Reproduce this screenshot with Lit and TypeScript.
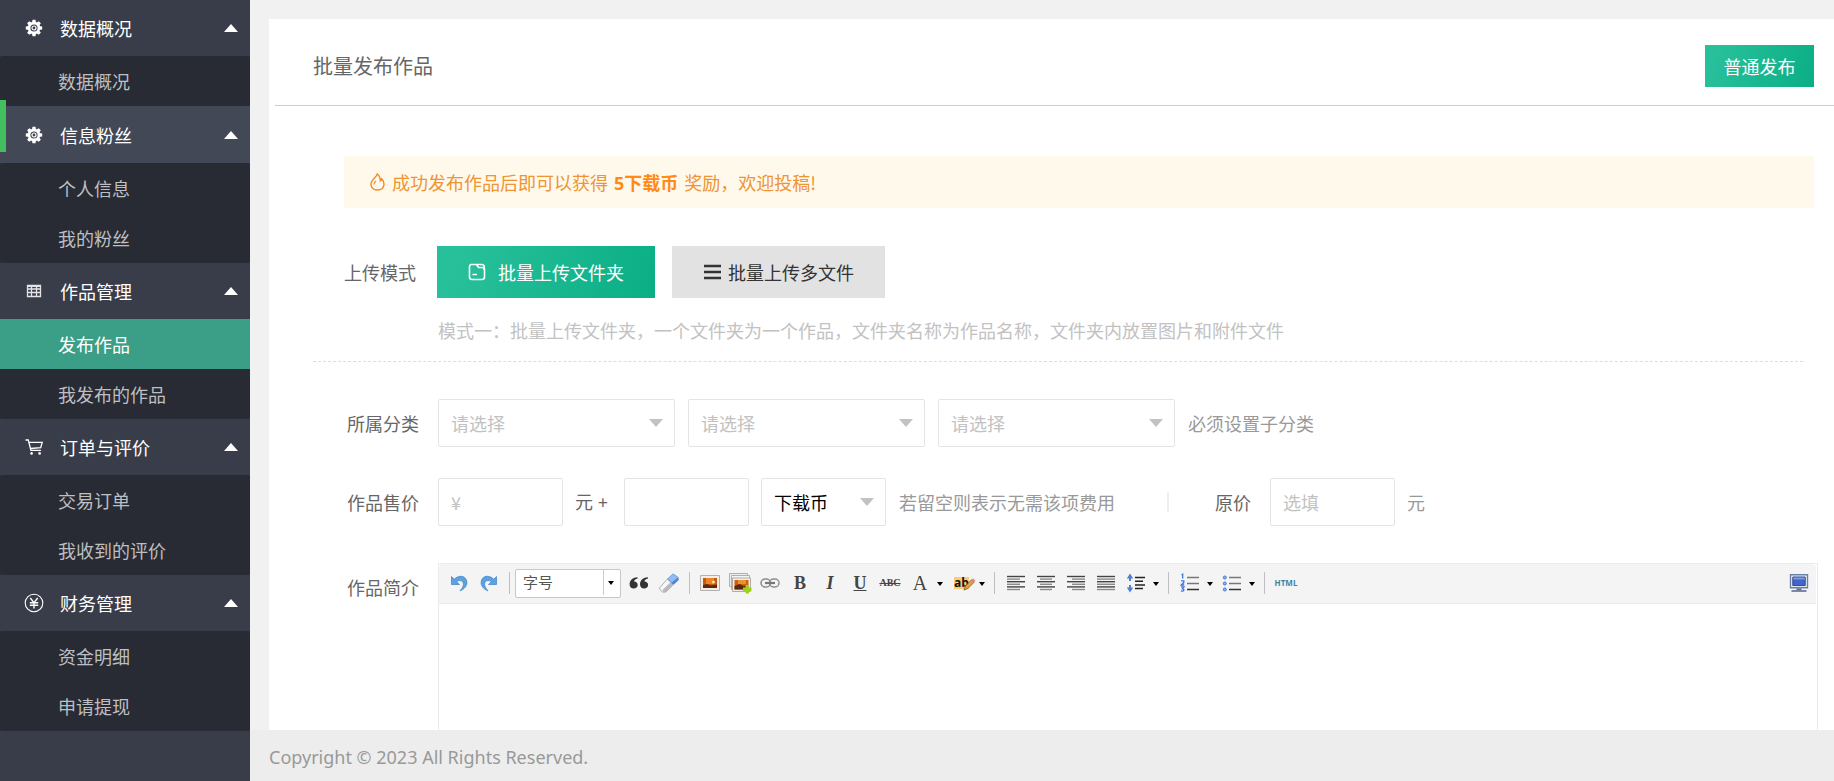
import { LitElement, html, css, svg, nothing, TemplateResult } from "lit";
import { customElement, state } from "lit/decorators.js";
import { classMap } from "lit/directives/class-map.js";

interface Group {
  title: string;
  icon: TemplateResult;
  items: string[];
  hot?: boolean;
}

const teeth = [0, 45, 90, 135, 180, 225, 270, 315];

const gear = html`<svg class="ico" viewBox="0 0 20 20">
  ${teeth.map(
    (a) => svg`<path d="M7.9 5.2 8.5 1.800h3L12.100 5.200z" fill="#fff" transform=${`rotate(${a} 10 10)`}/>`
  )}
  <circle cx="10" cy="10" r="4.900" fill="none" stroke="#fff" stroke-width="2.600" />
  <circle cx="10" cy="10" r="2" fill="none" stroke="#fff" stroke-width="1.200" />
</svg>`;

const grid = html`<svg class="ico" viewBox="0 0 20 20" fill="none" stroke="#e4e4e6">
  <path d="M3.5 4.5h13v11h-13zM3 8h14M3 11.5h14M7.5 5v11M12.5 5v11" stroke-width="1.3" />
  <path d="M3 5h14" stroke-width="2" />
</svg>`;

const cart = html`<svg class="ico" viewBox="0 0 20 20" fill="none" stroke="#fff" stroke-width="1.3">
  <path d="M1.5 3h2.8l2.6 10.3h10M5 5.3h13.2l-1.5 5.4-10.2.8" />
  <circle cx="7.6" cy="16.4" r="1.3" fill="#fff" stroke="none" />
  <circle cx="15.6" cy="16.4" r="1.3" fill="#fff" stroke="none" />
</svg>`;

const yen = html`<svg class="ico" viewBox="0 0 20 20" fill="none" stroke="#fff">
  <circle cx="10" cy="10" r="8.8" stroke-width="1.1" />
  <path d="M6.3 5 10 9.6 13.7 5M10 9.6V15.5M5.8 9.8h8.4M5.8 12.3h8.4" stroke-width="1.4" />
</svg>`;

const GROUPS: Group[] = [
  { title: "数据概况", icon: gear, items: ["数据概况"] },
  { title: "信息粉丝", icon: gear, items: ["个人信息", "我的粉丝"], hot: true },
  { title: "作品管理", icon: grid, items: ["发布作品", "我发布的作品"] },
  { title: "订单与评价", icon: cart, items: ["交易订单", "我收到的评价"] },
  { title: "财务管理", icon: yen, items: ["资金明细", "申请提现"] },
];

const FONT = css`"Noto Sans CJK SC", "Noto Sans", sans-serif`;
const LATIN = css`"Noto Sans", "Noto Sans CJK SC", sans-serif`;

@customElement("side-menu")
class SideMenu extends LitElement {
  @state() private closed = new Set<number>();
  @state() private current = "发布作品";

  static styles = css`
    :host {
      display: block;
      background: #393d49;
      font: 18px/24px ${FONT};
    }
    .group {
      position: relative;
    }
    .head {
      display: flex;
      align-items: center;
      width: 100%;
      height: 56px;
      padding: 0 12px 0 24px;
      border: 0;
      background: none;
      color: #fff;
      font: inherit;
      cursor: pointer;
    }
    .hot .head {
      height: 57px;
      background: #434856;
    }
    .hot::before {
      content: "";
      position: absolute;
      left: 0;
      top: -6px;
      width: 6px;
      height: 52px;
      background: #44bf5f;
    }
    .ico {
      width: 20px;
      height: 20px;
      margin-right: 16px;
    }
    .arrow {
      margin-left: auto;
      border: solid transparent;
      border-width: 0 7px 8px;
      border-bottom-color: #fff;
    }
    .shut .arrow {
      border-width: 8px 7px 0;
      border-top-color: #fff;
    }
    .list {
      border-radius: 2px;
      background: #282b33;
    }
    .link {
      display: flex;
      align-items: center;
      height: 50px;
      padding-left: 58px;
      color: #bebfc2;
      text-decoration: none;
    }
    .link.on {
      background: #3a9f86;
      color: #fff;
    }
  `;

  private toggle(i: number) {
    const next = new Set(this.closed);
    next.has(i) ? next.delete(i) : next.add(i);
    this.closed = next;
  }

  render() {
    return html`<nav>
      ${GROUPS.map(
        (g, i) => html`<section
          class=${classMap({ group: true, hot: !!g.hot, shut: this.closed.has(i) })}
        >
          <button class="head" type="button" @click=${() => this.toggle(i)}>
            ${g.icon}<span>${g.title}</span><span class="arrow"></span>
          </button>
          ${this.closed.has(i)
            ? nothing
            : html`<div class="list">
                ${g.items.map(
                  (t) => html`<a
                    href="#"
                    class=${classMap({ link: true, on: t === this.current })}
                    @click=${(e: Event) => {
                      e.preventDefault();
                      this.current = t;
                    }}
                    >${t}</a
                  >`
                )}
              </div>`}
        </section>`
      )}
    </nav>`;
  }
}

const lines = (rows: [number, number][]) => html`<svg class="pic" viewBox="0 0 20 20">
  ${rows.map(([x, w], i) => svg`<path d=${`M${x} ${3.5 + i * 2.6}h${w}`} stroke=${i % 2 ? "#8a8a8a" : "#444"} stroke-width="1.4"/>`)}
</svg>`;

const undoPath = "M2.5 3.5v8h8L7.6 8.8c2.4-2 5.6-1.4 6.6.9.9 2.4-.6 5-3.2 8.2 4.800-2 7.400-5.400 6.800-9.400C17 3 10.500 1.200 5.200 6.200z";

const picUndo = html`<svg class="pic" viewBox="0 0 20 20">
  <path d=${undoPath} fill="#5ba3e0" stroke="#3b7fc4" stroke-width=".7" />
</svg>`;
const picRedo = html`<svg class="pic" viewBox="0 0 20 20">
  <path d=${undoPath} transform="matrix(-1 0 0 1 20 0)" fill="#5ba3e0" stroke="#3b7fc4" stroke-width=".7" />
</svg>`;
const picQuote = html`<svg class="pic" viewBox="0 0 20 20" fill="#333">
  <path d="M8.500 4.200C4 4.300.6 7 .6 11.200c0 2.700 1.700 4.300 4.100 4.300 2.300 0 4-1.500 4-3.600 0-2.200-1.500-3.500-3.600-3.500.3-1.300 1.500-2.400 3.500-2.800z" />
  <path d="M18.900 4.200c-4.500.1-7.900 2.800-7.900 7 0 2.700 1.700 4.300 4.100 4.300 2.300 0 4-1.500 4-3.600 0-2.200-1.500-3.500-3.600-3.500.3-1.300 1.500-2.400 3.500-2.800z" />
</svg>`;
const picEraser = html`<svg class="pic" viewBox="0 0 20 20" stroke-width=".8">
  <path d="M.8 14.500 8.500 6l6 5.500-7.500 7.500H3.500L.8 16.500z" fill="#f8f8fa" stroke="#9a9aa2" />
  <path d="M3.500 17 12 8.800l2.500 2.700L7 19H4z" fill="#b9b9c0" />
  <path d="M8.500 6 14 .8l5.300 3.700v2.500l-4.800 4.500z" fill="#8dbcf7" stroke="#6d8fd0" />
  <path d="M12.500 9.800l6.300-5.300.5 2.500-4.800 4.500z" fill="#4a83e0" />
</svg>`;
const picImage = html`<svg class="pic" viewBox="0 0 20 20">
  <path d="M.5 2.500h19v15H.5z" fill="#f3efe8" stroke="#b5b1aa" />
  <path d="M3 5h14v10H3z" fill="#c85a10" />
  <path d="M6 5h8v6H6z" fill="#e8842a" />
  <circle cx="13.500" cy="9" r="1.500" fill="#ffe27a" />
  <path d="M3 12l4-1 4 1.500 6-1V15H3z" fill="#5a2a12" />
</svg>`;
const picImages = html`<svg class="pic wide" viewBox="0 0 24 22">
  <path d="M1.500 1.500h18v13h-18z" fill="#eee" stroke="#b0b0b0" />
  <path d="M3.500 3.500h18v14h-18z" fill="#f4f4f4" stroke="#b0b0b0" />
  <path d="M4.500 6h18v13.500h-18z" fill="#f3efe8" stroke="#b0aca5" />
  <path d="M6.500 8h14v9.500h-14z" fill="#d0600f" />
  <path d="M10 8h8v4h-8z" fill="#ef9030" />
  <path d="M6.500 14l5-2 4 2 5-1v4.500h-14z" fill="#5a2a12" />
  <path d="M17.500 13h3.500v2.500h2.500V19H21v2.500h-3.500V19H15v-3.500h2.500z" fill="#9bd01c" />
</svg>`;
const picLink = html`<svg class="pic" viewBox="0 0 20 20" fill="none" stroke="#8d8d8d" stroke-width="1.500">
  <rect x="1" y="6" width="9.500" height="8" rx="4" />
  <rect x="9.500" y="6" width="9.500" height="8" rx="4" />
  <path d="M5 10h10" stroke-width="2.200" stroke="#777" />
</svg>`;
const picSpacing = html`<svg class="pic" viewBox="0 0 20 20">
  <path d="M4 .5 7.200 5.500H5v2.500H3V5.500H.8zM4 19.500l3.200-5H5V12H3v2.500H.8z" fill="#4f7fd0" />
  <path d="M9 4.500h10M9 8.200h8M9 11.900h10M9 15.600h8" stroke="#222" stroke-width="1.500" />
</svg>`;
const picOl = html`<svg class="pic" viewBox="0 0 20 20">
  <path
    d="M1.500 2l1.200-.8v4.300M1 7.800h2.800v1.800L1.200 12h3M1 13.800h3l-1.500 2c2.500.2 1.500 3-1.500 2"
    fill="none" stroke="#3f76e0" stroke-width="1.300"
  />
  <path d="M7 4.500h12M7 10.500h12" stroke="#777" stroke-width="1.500" />
  <path d="M7 16.500h12" stroke="#333" stroke-width="1.500" />
</svg>`;
const picUl = html`<svg class="pic" viewBox="0 0 20 20">
  <g fill="#8fb3f5" stroke="#3f76e0">
    <circle cx="2.800" cy="4.500" r="1.500" />
    <circle cx="2.800" cy="10.500" r="1.500" />
    <circle cx="2.800" cy="16.500" r="1.500" />
  </g>
  <path d="M7 4.500h12M7 10.500h12" stroke="#777" stroke-width="1.500" />
  <path d="M7 16.500h12" stroke="#333" stroke-width="1.500" />
</svg>`;
const picScreen = html`<svg class="pic" viewBox="0 0 20 20">
  <path d="M1.500 1.800h17v13h-17z" fill="#f2f5fb" stroke="#6b7fa3" stroke-width="1.400" />
  <path d="M3.800 4h12.400v8.600H3.800z" fill="#3f66c8" stroke="#2c4795" />
  <path d="M4.300 4.500h11.400v2H4.300z" fill="#7d9be0" />
  <path d="M7.500 15.500h5v1.500h-5z" fill="#5c6d90" />
  <path d="M2.500 18h15" stroke="#5c6d90" stroke-width="1.600" />
</svg>`;
const picPencil = html`<svg class="pen" viewBox="0 0 14 14">
  <path d="M1 13l1.500-4L9 2l3 2.500-7 7z" fill="#e0a050" stroke="#7a5520" stroke-width=".8" />
  <path d="M9 2l1.500-1.500 3 2L12 4.500z" fill="#e58a8a" />
</svg>`;

@customElement("rich-editor")
class RichEditor extends LitElement {
  static styles = css`
    :host {
      display: flex;
      flex-direction: column;
      border: 1px solid #ebebeb;
      border-bottom: 0;
      font: 15px/20px ${FONT};
    }
    .bar {
      display: flex;
      align-items: center;
      height: 39px;
      margin-right: 1px;
      padding: 0 2px 0 5px;
      border-bottom: 1px solid #ebebeb;
      border-radius: 4px 4px 0 0;
      background: #f4f4f4;
    }
    .tool {
      display: flex;
      flex: none;
      align-items: center;
      justify-content: center;
      width: 30px;
      height: 30px;
      padding: 0 0 2px;
      border: 0;
      background: none;
      color: #444;
      font: bold 18px/20px "Liberation Serif", serif;
      cursor: pointer;
    }
    .pic {
      flex: none;
      width: 20px;
      height: 20px;
    }
    .wide {
      width: 24px;
      height: 22px;
    }
    .em {
      font-style: italic;
    }
    .under {
      text-decoration: underline;
    }
    .strike {
      font-size: 10px;
      text-decoration: line-through;
    }
    .big {
      font-weight: normal;
      font-size: 20px;
    }
    .mark {
      background: #fbcb7c;
      color: #111;
      font: bold 12px/12px "Open Sans", sans-serif;
    }
    .pen {
      width: 13px;
      height: 13px;
      margin: 4px -6px 0 -6px;
    }
    .code {
      color: #3f83a8;
      font: bold 8px/12px "Open Sans", sans-serif;
    }
    .drop {
      flex: none;
      width: 12px;
      height: 30px;
      padding: 2px;
      border: 0;
      background: none;
    }
    .drop::before {
      content: "";
      display: block;
      border: solid transparent;
      border-width: 4px 3px 0;
      border-top-color: #000;
      width: 0;
    }
    .sep {
      flex: none;
      width: 1px;
      height: 22px;
      margin: 0 5px 2px;
      background: #bfbfc3;
    }
    .drop + .sep {
      margin-right: 6px;
    }
    .size {
      position: relative;
      flex: none;
      width: 106px;
      margin-right: 3px;
    }
    .size select {
      display: block;
      box-sizing: border-box;
      width: 100%;
      height: 29px;
      padding: 0 7px 3px;
      border: 1px solid #c8c8c8;
      border-radius: 2px;
      appearance: none;
      background: #fff;
      color: #555;
      font: inherit;
    }
    .size::after {
      content: "";
      position: absolute;
      right: 7px;
      top: 12px;
      border: solid transparent;
      border-width: 4px 3px 0;
      border-top-color: #000;
    }
    .size::before {
      content: "";
      position: absolute;
      right: 17px;
      top: 1px;
      bottom: 3px;
      width: 1px;
      background: #ccc;
    }
    .last {
      margin-left: auto;
    }
    .text {
      flex: 1;
      min-height: 0;
      padding: 8px;
      border: 0;
      outline: 0;
      resize: none;
      background: #fff;
      font: inherit;
    }
  `;

  private tool(name: string, body: unknown, cls = "") {
    return html`<button type="button" class="tool ${cls}" title=${name} aria-label=${name}>${body}</button>`;
  }

  private drop(name: string) {
    return html`<button type="button" class="drop" aria-label=${name}></button>`;
  }

  render() {
    const sep = html`<span class="sep"></span>`;
    return html`
      <div class="bar" role="toolbar">
        ${this.tool("撤销", picUndo)} ${this.tool("重做", picRedo)} ${sep}
        <div class="size">
          <select aria-label="字号">
            <option>字号</option>
          </select>
        </div>
        ${this.tool("引用", picQuote)} ${this.tool("清除格式", picEraser)} ${sep}
        ${this.tool("单图上传", picImage)} ${this.tool("多图上传", picImages)}
        ${this.tool("超链接", picLink)} ${this.tool("加粗", "B")} ${this.tool("斜体", "I", "em")}
        ${this.tool("下划线", "U", "under")} ${this.tool("删除线", "ABC", "strike")}
        ${this.tool("字体颜色", "A", "big")} ${this.drop("选择字体颜色")}
        ${this.tool("背景色", html`<span class="mark">ab</span>${picPencil}`)}
        ${this.drop("选择背景色")} ${sep}
        ${this.tool("居左对齐", lines([[1, 18], [1, 13], [1, 18], [1, 13], [1, 18], [1, 13]]))}
        ${this.tool("居中对齐", lines([[1, 18], [4, 12], [1, 18], [4, 12], [1, 18], [4, 12]]))}
        ${this.tool("居右对齐", lines([[1, 18], [6, 13], [1, 18], [6, 13], [1, 18], [6, 13]]))}
        ${this.tool("两端对齐", lines([[1, 18], [1, 18], [1, 18], [1, 18], [1, 18], [1, 18]]))}
        ${this.tool("行间距", picSpacing)} ${this.drop("选择行间距")} ${sep}
        ${this.tool("有序列表", picOl)} ${this.drop("选择有序列表")}
        ${this.tool("无序列表", picUl)} ${this.drop("选择无序列表")} ${sep}
        ${this.tool("源代码", "HTML", "code")} ${this.tool("全屏", picScreen, "last")}
      </div>
      <textarea class="text" aria-label="作品简介"></textarea>
    `;
  }
}

@customElement("app-root")
class AppRoot extends LitElement {
  @state() private mode = 0;

  static styles = css`
    :host {
      display: grid;
      grid-template-columns: 250px minmax(0, 1fr);
      height: 100vh;
      background: #f1f1f1;
      color: #666;
      font: 18px/24px ${FONT};
    }
    .main {
      display: grid;
      grid-template-rows: minmax(0, 1fr) auto;
      min-height: 0;
    }
    .panel {
      display: flex;
      flex-direction: column;
      min-height: 0;
      margin: 19px 0 0 19px;
      background: #fff;
      overflow: hidden;
    }
    .top {
      display: flex;
      align-items: center;
      justify-content: space-between;
      margin-left: 6px;
      padding: 26px 20px 18px 38px;
      border-bottom: 1px solid #ccc;
    }
    .title {
      margin: 0;
      font: 20px/28px ${FONT};
    }
    .btn {
      display: flex;
      align-items: center;
      justify-content: center;
      height: 52px;
      padding: 0 31px;
      border: 0;
      background: #e2e2e2;
      color: #333;
      font: inherit;
      gap: 7px;
      cursor: pointer;
    }
    .btn.on {
      background: linear-gradient(110deg, #28c09b 10%, #0aae85);
      color: #fff;
      gap: 12px;
    }
    .btn.small {
      height: 42px;
      min-width: 109px;
      padding: 0 18px;
    }
    .btn svg {
      width: 18px;
      height: 18px;
    }
    .form {
      display: flex;
      flex: 1;
      flex-direction: column;
      min-height: 0;
      padding: 50px 16px 0 44px;
    }
    .tip {
      display: flex;
      align-items: center;
      height: 52px;
      margin: 0 4px 38px 31px;
      padding-left: 25px;
      gap: 6px;
      background: #fff9ec;
      color: #ee9433;
    }
    .tip svg {
      width: 17px;
      height: 20px;
    }
    .tip b {
      margin: 0 2px;
      color: #ff8a17;
      font-family: ${LATIN};
    }
    .row {
      display: flex;
      align-items: center;
      padding-left: 34px;
    }
    .row.modes {
      padding-left: 31px;
    }
    .name {
      flex: none;
      width: 91px;
    }
    .modes .name {
      width: 93px;
    }
    .modes .btn {
      margin-right: 17px;
    }
    .note {
      margin: 0;
      padding: 20px 0 19px 125px;
      color: #c2c2c2;
    }
    .rule {
      margin: 0 15px 37px 0;
      border: 0;
      border-top: 1px dashed #ddd;
    }
    .field {
      position: relative;
      width: 237px;
      margin-right: 13px;
    }
    .field.short {
      width: 125px;
      margin-right: 12px;
    }
    .field.short.pick {
      margin-right: 13px;
    }
    .box {
      display: block;
      box-sizing: border-box;
      width: 100%;
      height: 48px;
      padding: 0 12px;
      border: 1px solid #e4e4e4;
      border-radius: 2px;
      outline: 0;
      appearance: none;
      background: #fff;
      color: #000;
      font: inherit;
    }
    .box.empty,
    .box::placeholder {
      color: #c2c2c2;
      opacity: 1;
    }
    .pick::after {
      content: "";
      position: absolute;
      right: 12px;
      top: 20px;
      border: solid transparent;
      border-width: 8px 7px 0;
      border-top-color: #c2c2c2;
      pointer-events: none;
    }
    .price {
      margin: 31px 0 37px;
    }
    .grey {
      color: #999;
    }
    .plus {
      width: 49px;
      font-family: ${LATIN};
    }
    .bar {
      width: 2px;
      height: 20px;
      margin: 0 46px 0 52px;
      background: #eee;
    }
    .orig {
      width: 55px;
    }
    .intro {
      flex: 1;
      align-items: stretch;
      min-height: 0;
    }
    .intro .name {
      padding-top: 12px;
    }
    rich-editor {
      flex: 1;
      min-width: 0;
    }
    .foot {
      padding: 15px 19px 12px;
      background: #ededed;
      color: #999;
      font-family: ${LATIN};
    }
  `;

  private category(label: string) {
    return html`<div class="field pick">
      <select class="box empty" aria-label=${label}>
        <option>请选择</option>
      </select>
    </div>`;
  }

  render() {
    const notes = [
      "模式一：批量上传文件夹，一个文件夹为一个作品，文件夹名称为作品名称，文件夹内放置图片和附件文件",
      "模式二：批量上传多文件",
    ];
    return html`
      <side-menu></side-menu>
      <div class="main">
        <main class="panel">
          <header class="top">
            <h1 class="title">批量发布作品</h1>
            <button type="button" class="btn on small">普通发布</button>
          </header>
          <form class="form">
            <div class="tip">
              <svg viewBox="0 0 17 20" fill="none" stroke="#f08a24" stroke-width="1.400">
                <path
                  d="M8.300 2C8 5 2 7.200 2 12.300 2 15.800 4.800 18 8.500 18S15 15.800 15 12.300c0-2.600-1.200-4.300-2.300-5.500-.3 1-.7 1.600-1.400 2C11.400 6 10.300 3.500 8.300 2z"
                />
                <path d="M5 12.500c0-1.500.8-2.500 2-3.500" stroke-width="1.200" />
              </svg>
              <span>成功发布作品后即可以获得 <b>5下载币</b> 奖励，欢迎投稿!</span>
            </div>
            <div class="row modes">
              <span class="name">上传模式</span>
              <button type="button" class="btn ${this.mode === 0 ? "on" : ""}" @click=${() => (this.mode = 0)}>
                <svg viewBox="0 0 18 18" fill="none" stroke="currentColor" stroke-width="1.600">
                  <path d="M3 1.500h5.500l2 3H14a2.500 2.500 0 0 1 2.500 2.500v7a2.500 2.500 0 0 1-2.500 2.500H4A2.500 2.500 0 0 1 1.500 14V3.500A2 2 0 0 1 3 1.500z" />
                  <path d="M9 1.500h4.500a2.500 2.500 0 0 1 2.800 2.500v3M4.500 11.500h4.500" />
                </svg>
                批量上传文件夹
              </button>
              <button type="button" class="btn ${this.mode === 1 ? "on" : ""}" @click=${() => (this.mode = 1)}>
                <svg viewBox="0 0 18 18" stroke="currentColor" stroke-width="2.600">
                  <path d="M1 3h17M1 9h17M1 15h17" />
                </svg>
                批量上传多文件
              </button>
            </div>
            <p class="note">${notes[this.mode]}</p>
            <hr class="rule" />
            <div class="row">
              <span class="name">所属分类</span>
              ${this.category("一级分类")} ${this.category("二级分类")} ${this.category("三级分类")}
              <span class="grey">必须设置子分类</span>
            </div>
            <div class="row price">
              <label class="name" for="money">作品售价</label>
              <div class="field short"><input id="money" class="box" placeholder="¥" /></div>
              <span class="plus">元 +</span>
              <div class="field short"><input class="box" aria-label="下载币数量" /></div>
              <div class="field short pick">
                <select class="box" aria-label="币种">
                  <option>下载币</option>
                </select>
              </div>
              <span class="grey">若留空则表示无需该项费用</span>
              <span class="bar"></span>
              <label class="orig" for="orig">原价</label>
              <div class="field short"><input id="orig" class="box" placeholder="选填" /></div>
              <span class="grey">元</span>
            </div>
            <div class="row intro">
              <span class="name">作品简介</span>
              <rich-editor></rich-editor>
            </div>
          </form>
        </main>
        <footer class="foot">Copyright © 2023 All Rights Reserved.</footer>
      </div>
    `;
  }
}
